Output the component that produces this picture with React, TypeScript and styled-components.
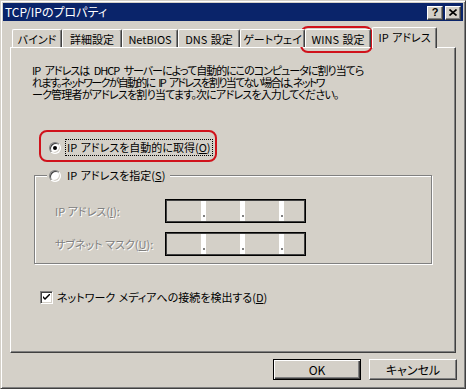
import React from 'react';
import styled, { createGlobalStyle, css } from 'styled-components';

const FACE = '#d4d0c8';

const GlobalStyle = createGlobalStyle`
  html, body {
    margin: 0;
    padding: 0;
    background: ${FACE};
  }
  body {
    font-family: "Noto Sans CJK JP", "Noto Sans", sans-serif;
    font-size: 11px;
    font-feature-settings: "palt" 1;
    color: #000;
  }
`;

const Window = styled.div`
  position: relative;
  width: 466px;
  height: 389px;
  box-sizing: border-box;
  padding: 2px;
  background: ${FACE};
  border: 1px solid;
  border-color: ${FACE} #404040 #404040 ${FACE};
  box-shadow: inset 1px 1px 0 #fff, inset -1px -1px 0 #808080;
  display: flex;
  flex-direction: column;
`;

const TitleBar = styled.div`
  height: 18px;
  background: #0a246a;
  display: flex;
  align-items: center;
  padding: 0 2px 0 2px;
  color: #fff;
`;

const TitleText = styled.div`
  flex: 1;
  font-size: 12px;
  line-height: 12px;
  white-space: nowrap;
`;

const TitleButtons = styled.div`
  display: flex;
  gap: 2px;
  margin-top: 1px;
`;

const TitleButton = styled.div`
  width: 16px;
  height: 14px;
  box-sizing: border-box;
  background: ${FACE};
  border: 1px solid;
  border-color: #fff #404040 #404040 #fff;
  box-shadow: inset -1px -1px 0 #808080;
  display: flex;
  align-items: center;
  justify-content: center;
  color: #000;
  font-family: "Liberation Sans", sans-serif;
  font-weight: bold;
  font-size: 11px;
  line-height: 11px;
`;

const TabRow = styled.div`
  position: relative;
  z-index: 1;
  display: flex;
  align-items: flex-end;
  height: 20px;
  margin: 6px 0 0 7px;
  padding-left: 2px;
`;

const Tab = styled.div<{ $w: number; $active?: boolean }>`
  box-sizing: border-box;
  width: ${(p) => p.$w}px;
  height: 18px;
  background: ${FACE};
  border-left: 1px solid #fff;
  border-top: 1px solid #fff;
  border-right: 1px solid #404040;
  box-shadow: inset -1px 0 0 #808080;
  border-radius: 2px 2px 0 0;
  display: flex;
  align-items: center;
  justify-content: center;
  font-size: 11px;
  line-height: 12px;
  word-spacing: 1px;
  white-space: nowrap;
  ${(p) =>
    p.$active &&
    css`
      height: 21px;
      margin: 0 0 -1px 1px;
      padding-bottom: 3px;
    `}
`;

const Panel = styled.div`
  box-sizing: border-box;
  width: 446px;
  height: 306px;
  margin-left: 7px;
  border: 1px solid;
  border-color: #fff #404040 #404040 #fff;
  box-shadow: inset -1px -1px 0 #808080;
  padding-top: 16px;
  display: flex;
  flex-direction: column;
`;

const Description = styled.div`
  padding-left: 21px;
  display: flex;
  flex-direction: column;
`;

const DescLine = styled.div<{ $ls: number }>`
  height: 12px;
  line-height: 12px;
  letter-spacing: ${(p) => p.$ls}px;
  word-spacing: 3px;
  white-space: nowrap;
`;

const RadioRow = styled.div<{ $top: number }>`
  display: flex;
  align-items: center;
  height: 17px;
  margin: ${(p) => p.$top}px 0 0 38px;
`;

const Radio = styled.span<{ $checked?: boolean }>`
  position: relative;
  width: 12px;
  height: 12px;
  box-sizing: border-box;
  border-radius: 50%;
  background: #fff;
  border: 1px solid;
  border-color: #808080 #fff #fff #808080;
  box-shadow: inset 1px 1px 0 #404040, inset -1px -1px 0 ${FACE};
  margin-right: 4px;
  flex: none;
  ${(p) =>
    p.$checked &&
    css`
      &::after {
        content: '';
        position: absolute;
        left: 3px;
        top: 3px;
        width: 4px;
        height: 4px;
        border-radius: 50%;
        background: #000;
      }
    `}
`;

const Label = styled.span<{ $focus?: boolean }>`
  line-height: 13px;
  padding: 1px 1px;
  border: 1px solid transparent;
  word-spacing: 1px;
  white-space: nowrap;
  ${(p) =>
    p.$focus &&
    css`
      border: 1px dotted #000;
    `}
`;

const Key = styled.span`
  text-decoration: underline;
`;

const Group = styled.div`
  box-sizing: border-box;
  width: 398px;
  height: 89px;
  margin: 19px 0 0 23px;
  border: 1px solid #808080;
  box-shadow: inset 1px 1px 0 #fff, 1px 1px 0 #fff;
  display: flex;
  flex-direction: column;
  align-items: flex-start;
`;

const GroupHeader = styled.div`
  display: flex;
  align-items: center;
  height: 17px;
  margin: -9px 0 0 12px;
  padding: 0 3px 0 2px;
  background: ${FACE};
`;

const FieldRows = styled.div`
  display: flex;
  flex-direction: column;
  gap: 9px;
  margin-top: 15px;
  padding-left: 20px;
`;

const FieldRow = styled.div`
  display: flex;
  align-items: center;
  height: 24px;
`;

const DisabledLabel = styled.span`
  width: 110px;
  color: #808080;
  text-shadow: 1px 1px 0 #fff;
  white-space: nowrap;
  line-height: 12px;
`;

const IpBox = styled.div`
  box-sizing: border-box;
  width: 141px;
  height: 24px;
  border: 1px solid #000;
  box-shadow: inset 0 0 0 1px #404040;
  padding: 1px;
  background: #fff;
  display: flex;
`;

const Octet = styled.div<{ $last?: boolean }>`
  width: 34px;
  background: ${FACE};
  ${(p) =>
    p.$last &&
    css`
      flex: 1;
    `}
`;

const Dot = styled.div`
  width: 5px;
  display: flex;
  align-items: flex-end;
  justify-content: center;
  padding-bottom: 4px;
  box-sizing: border-box;
  &::after {
    content: '';
    width: 2px;
    height: 2px;
    background: #808080;
  }
`;

const CheckRow = styled.div`
  display: flex;
  align-items: center;
  height: 13px;
  margin: 27px 0 0 29px;
  gap: 2px;
`;

const CheckBox = styled.span`
  width: 13px;
  height: 13px;
  box-sizing: border-box;
  background: #fff;
  border: 1px solid;
  border-color: #808080 #fff #fff #808080;
  box-shadow: inset 1px 1px 0 #404040, inset -1px -1px 0 ${FACE};
  display: flex;
  align-items: center;
  justify-content: center;
  flex: none;
`;

const ButtonRow = styled.div`
  display: flex;
  justify-content: flex-end;
  gap: 8px;
  margin-top: 6px;
  padding-right: 6px;
`;

const Button = styled.div<{ $default?: boolean }>`
  width: 88px;
  height: 21px;
  box-sizing: border-box;
  background: ${FACE};
  border: 1px solid;
  border-color: #fff #404040 #404040 #fff;
  box-shadow: inset -1px -1px 0 #808080;
  display: flex;
  align-items: center;
  justify-content: center;
  font-size: 12px;
  line-height: 12px;
  ${(p) =>
    p.$default &&
    css`
      border: 1px solid #000;
      box-shadow: inset 1px 1px 0 #fff, inset -1px -1px 0 #404040,
        inset -2px -2px 0 #808080;
    `}
`;

const Highlight = styled.div<{ $x: number; $y: number; $w: number; $h: number }>`
  position: absolute;
  left: ${(p) => p.$x}px;
  top: ${(p) => p.$y}px;
  width: ${(p) => p.$w}px;
  height: ${(p) => p.$h}px;
  box-sizing: border-box;
  border: 2px solid #d0121b;
  border-radius: 8px;
  pointer-events: none;
`;

const tabs = [
  { label: 'バインド', w: 50 },
  { label: '詳細設定', w: 60 },
  { label: 'NetBIOS', w: 56 },
  { label: 'DNS 設定', w: 62 },
  { label: 'ゲートウェイ', w: 65 },
  { label: 'WINS 設定', w: 66 },
];

const description = [
  { text: 'IP アドレスは DHCP サーバーによって自動的にこのコンピュータに割り当てら', ls: -1 },
  { text: 'れます。ネットワークが自動的に IP アドレスを割り当てない場合は、ネットワ', ls: -1.7 },
  { text: 'ーク管理者がアドレスを割り当てます。次にアドレスを入力してください。', ls: -0.8 },
];

const IpField = () => (
  <IpBox>
    <Octet />
    <Dot />
    <Octet />
    <Dot />
    <Octet />
    <Dot />
    <Octet $last />
  </IpBox>
);

const App: React.FC = () => {
  return (
    <>
      <GlobalStyle />
      <Window>
        <TitleBar>
          <TitleText>TCP/IPのプロパティ</TitleText>
          <TitleButtons>
            <TitleButton>?</TitleButton>
            <TitleButton>
              <svg width="8" height="7" viewBox="0 0 8 7">
                <path d="M0.5 0.5 L7.5 6.5 M7.5 0.5 L0.5 6.5" stroke="#000" strokeWidth="1.6" />
              </svg>
            </TitleButton>
          </TitleButtons>
        </TitleBar>

        <TabRow>
          {tabs.map((t) => (
            <Tab key={t.label} $w={t.w}>
              {t.label}
            </Tab>
          ))}
          <Tab $w={65} $active>
            IP アドレス
          </Tab>
        </TabRow>

        <Panel>
          <Description>
            {description.map((l) => (
              <DescLine key={l.text} $ls={l.ls}>
                {l.text}
              </DescLine>
            ))}
          </Description>

          <RadioRow $top={39}>
            <Radio $checked />
            <Label $focus>
              IP アドレスを自動的に取得(<Key>O</Key>)
            </Label>
          </RadioRow>

          <Group>
            <GroupHeader>
              <Radio />
              <Label>
                IP アドレスを指定(<Key>S</Key>)
              </Label>
            </GroupHeader>
            <FieldRows>
              <FieldRow>
                <DisabledLabel>
                  IP アドレス(<Key>I</Key>):
                </DisabledLabel>
                <IpField />
              </FieldRow>
              <FieldRow>
                <DisabledLabel>
                  サブネット マスク(<Key>U</Key>):
                </DisabledLabel>
                <IpField />
              </FieldRow>
            </FieldRows>
          </Group>

          <CheckRow>
            <CheckBox>
              <svg width="7" height="7" viewBox="0 0 7 7">
                <path d="M0 2 L0 4 L2 6 L7 1 L7 -1 L2 4 Z" fill="#000" />
              </svg>
            </CheckBox>
            <Label>
              ネットワーク メディアへの接続を検出する(<Key>D</Key>)
            </Label>
          </CheckRow>
        </Panel>

        <ButtonRow>
          <Button $default>OK</Button>
          <Button>キャンセル</Button>
        </ButtonRow>

        <Highlight $x={299} $y={25} $w={73} $h={27} />
        <Highlight $x={38} $y={129} $w={178} $h={32} />
      </Window>
    </>
  );
};

export default App;
